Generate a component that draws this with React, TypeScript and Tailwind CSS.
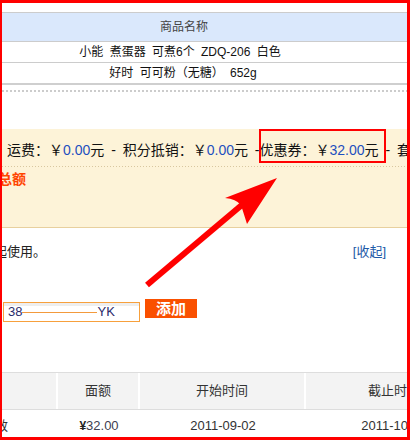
import React from "react";

const F = { fontFamily: '"Liberation Sans", "Noto Sans CJK SC", sans-serif' };

export default function App() {
  return (
    <div
      className="relative w-[410px] h-[440px] bg-white border-[#ff0000] border-t-[3px] border-l-[2px] border-r-[3px] border-b-[3px] overflow-hidden text-[#111]"
      style={F}
    >
      <div className="flex flex-col w-full h-full overflow-hidden">
        <div className="h-[9px] shrink-0" />
        {/* product table */}
        <div className="border-t border-[#cccccc] shrink-0">
          <div className="h-[29px] bg-[#dae8fc] border-b border-[#cccccc] flex items-center">
            <div className="w-[364px] text-center text-[12px] text-[#444]">商品名称</div>
          </div>
          <div className="h-[21px] border-b border-[#cccccc] flex items-center">
            <div className="w-[356px] text-center text-[12px] whitespace-nowrap [word-spacing:3px]">
              小能 煮蛋器 可煮6个 ZDQ-206 白色
            </div>
          </div>
          <div className="h-[22px] border-b-2 border-[#cfcfcf] flex items-center">
            <div className="w-[362px] text-center text-[12px] whitespace-nowrap [word-spacing:3px]">
              好时 可可粉（无糖） 652g
            </div>
          </div>
        </div>
        <div className="h-[5px] shrink-0" />
        <div className="h-[2px] shrink-0 bg-[repeating-linear-gradient(90deg,#cccccc_0_2px,transparent_2px_4px)]" />
        <div className="h-[37px] shrink-0" />
        {/* cream block */}
        <div className="h-[99px] shrink-0 bg-[#fdf3d8] border-b border-[#e8d09e] flex flex-col">
          <div className="h-[37px] flex items-center pt-[6px] pl-[5px] text-[14px] whitespace-nowrap [word-spacing:3px]">
            运费：￥<span className="text-[#1d4fbf]">0.00</span>元 - 积分抵销：￥
            <span className="text-[#1d4fbf]">0.00</span>元 -优惠券：￥
            <span className="text-[#1d4fbf]">32.00</span>元 - 套餐
          </div>
          <div className="h-px bg-[repeating-linear-gradient(90deg,#d8c79f_0_1px,transparent_1px_3px)]" />
          <div className="h-[24px] flex items-center ml-[-4px] text-[14px] font-bold text-[#ff4400] whitespace-nowrap">
            总额
          </div>
        </div>
        {/* note row */}
        <div className="mt-[14px] h-[20px] shrink-0 flex items-center justify-between pr-[21px] text-[13px]">
          <span className="ml-[-8px] whitespace-nowrap text-[#222]">起使用。</span>
          <span className="text-[#1e5aa8] whitespace-nowrap">[收起]</span>
        </div>
        {/* input row */}
        <div className="mt-[37px] shrink-0 flex items-start">
          <div className="ml-[1px] mt-[3px] w-[137px] h-[20px] border border-[#f7a03c] shadow-[inset_0_3px_0_#eeeeee] flex items-center pl-[4px] text-[13px] text-[#2b2b6b]">
            <span>38</span>
            <span className="w-[75px] h-px bg-[#f39a3c]" />
            <span>YK</span>
          </div>
          <div className="ml-[5px] w-[52px] h-[19px] bg-[#fa5000] flex items-center justify-center text-white font-bold text-[15px] leading-none">
            添加
          </div>
        </div>
        {/* coupon table */}
        <div className="mt-[50px] shrink-0 border-t border-[#dddddd] w-[600px]">
          <div className="h-[37px] bg-[#f3f3f3] border-b border-[#dddddd] flex text-[13px] text-[#333]">
            <div className="w-[56px] border-r-2 border-white" />
            <div className="w-[82px] border-r-2 border-white flex items-center justify-center">面额</div>
            <div className="w-[166px] border-r-2 border-white flex items-center justify-center">开始时间</div>
            <div className="w-[176px] flex items-center justify-center">截止时间</div>
          </div>
          <div className="h-[34px] flex text-[13px] text-[#333] pb-[2px]">
            <div className="w-[56px] flex items-center">
              <span className="ml-[-7px]">效</span>
            </div>
            <div className="w-[82px] flex items-center justify-center">
              <span className="font-bold text-[12px] text-[#222]">¥</span>
              <span className="text-[#404050]">32.00</span>
            </div>
            <div className="w-[166px] flex items-center justify-center">2011-09-02</div>
            <div className="w-[176px] flex items-center justify-center">2011-10-02</div>
          </div>
        </div>
      </div>
      {/* annotation overlay */}
      <svg
        className="absolute left-[-2px] top-[-3px] pointer-events-none"
        width="410"
        height="440"
        viewBox="0 0 410 440"
      >
        <rect x="260" y="130" width="125" height="32" fill="none" stroke="#ff0000" strokeWidth="2" />
        <line x1="147" y1="285" x2="243" y2="204" stroke="#ff0000" strokeWidth="6" />
        <path d="M277,178 L225,198 Q236,199 241,205 L247,224 Z" fill="#ff0000" />
      </svg>
    </div>
  );
}
